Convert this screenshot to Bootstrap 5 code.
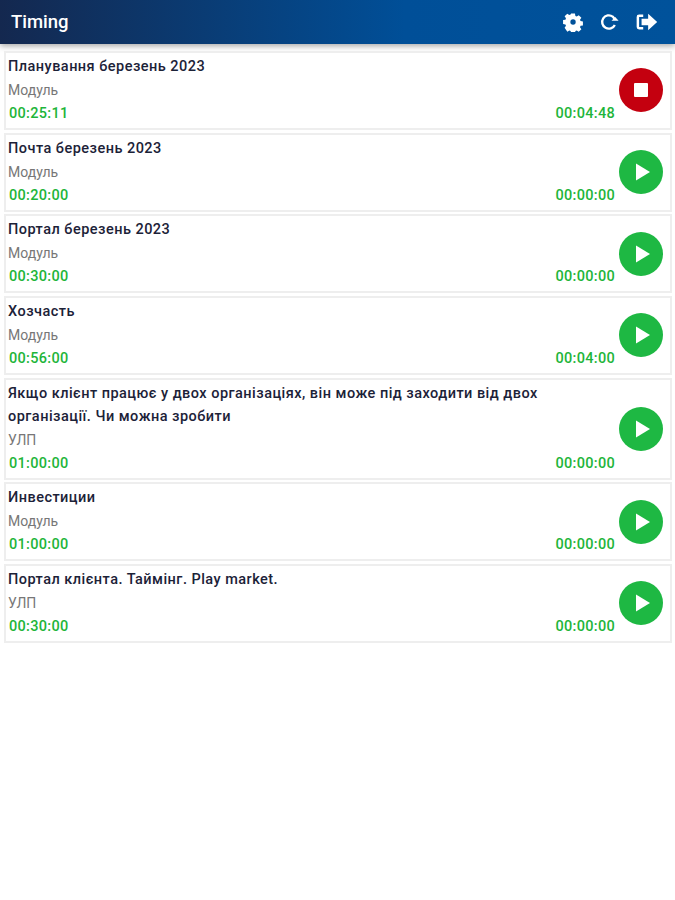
<!DOCTYPE html>
<html lang="en">
<head>
    <meta charset="UTF-8">
    <meta name="viewport" content="width=device-width, initial-scale=1.0">
    <title>Timing</title>
    <link href="https://cdn.jsdelivr.net/npm/bootstrap@5.3.0/dist/css/bootstrap.min.css" rel="stylesheet">
    <style>
        body { font-family: Roboto, "Liberation Sans", sans-serif; background: #fff; }
        .app-bar { height: 44px; padding: 0 17px 0 11px; background: linear-gradient(90deg, #14284f 0%, #004f98 60%, #00529b 100%); box-shadow: 0 2px 6px rgba(0,0,0,.35); }
        .app-title { color: #fff; font-size: 18.5px; font-weight: 500; padding-top: 2px; }
        .task-list { padding: 7px 3px 0 4px; gap: 2.7px; }
        .task-item { border: 2px solid #eee; padding: 2px 7px 3px 2px; min-height: 79px; }
        .task-name { color: #1c2238; font-size: 14.5px; font-weight: 500; line-height: 23px; letter-spacing: .47px; }
        .task-kind { color: #777; font-size: 14px; line-height: 24px; }
        .task-time { color: #1eb53a; font-size: 14.5px; font-weight: 500; line-height: 23px; letter-spacing: .3px; padding-left: 1px; }
        .round-btn { width: 44px; height: 44px; border: 0; padding: 0; border-radius: 50%; flex: none; margin-top: .5px; }
        .round-stop { background: #c4000f; }
        .round-play { background: #1eb843; }
    </style>
</head>
<body>

    <!-- Top bar -->
    <header class="app-bar d-flex align-items-center justify-content-between">
        <span class="app-title">Timing</span>
        <div class="d-flex align-items-center gap-3">
            <svg width="20" height="20" viewBox="0 0 24 24" fill="#fff"><path fill-rule="evenodd" d="M9.5 1h5l.6 3.1 1.7.7 2.6-1.8 3.5 3.5-1.8 2.6.7 1.7 3.1.6v5l-3.1.6-.7 1.7 1.8 2.6-3.5 3.5-2.6-1.8-1.7.7-.6 3.1h-5l-.6-3.1-1.7-.7-2.6 1.8L1 19.4l1.8-2.6-.7-1.7L-1 14.5v-5l3.1-.6.7-1.7L1 4.6 4.5 1.1l2.6 1.8 1.7-.7zM12 8.5a3.5 3.5 0 1 0 0 7 3.5 3.5 0 0 0 0-7z" transform="translate(1 1) scale(.92)"/></svg>
            <svg width="20" height="20" viewBox="0 0 24 24" fill="none" stroke="#fff" stroke-width="2.8"><path d="M19 15.5A8 8 0 1 1 16.5 5.5L18.5 8"/><path d="M15 10.5h8.5l-4-4.5z" fill="#fff" stroke="none"/></svg>
            <svg width="23" height="20" viewBox="0 0 28 24" fill="#fff"><path d="M10 3H5a3 3 0 0 0-3 3v12a3 3 0 0 0 3 3h5v-3H5V6h5z"/><path d="M16 2l11 10-11 10v-6H8V8h8z"/></svg>
        </div>
    </header>

    <!-- Task list -->
    <main id="tasks" class="task-list d-flex flex-column"></main>

    <script src="https://cdn.jsdelivr.net/npm/bootstrap@5.3.0/dist/js/bootstrap.bundle.min.js"></script>
    <script>
        const tasks = [
            { name: 'Планування березень 2023', kind: 'Модуль', plan: '00:25:11', spent: '00:04:48', running: true },
            { name: 'Почта березень 2023', kind: 'Модуль', plan: '00:20:00', spent: '00:00:00' },
            { name: 'Портал березень 2023', kind: 'Модуль', plan: '00:30:00', spent: '00:00:00' },
            { name: 'Хозчасть', kind: 'Модуль', plan: '00:56:00', spent: '00:04:00' },
            { name: 'Якщо клієнт працює у двох організаціях, він може під заходити від двох організації. Чи можна зробити', kind: 'УЛП', plan: '01:00:00', spent: '00:00:00' },
            { name: 'Инвестиции', kind: 'Модуль', plan: '01:00:00', spent: '00:00:00' },
            { name: 'Портал клієнта. Таймінг. Play market.', kind: 'УЛП', plan: '00:30:00', spent: '00:00:00' }
        ];
        const stopIcon = '<svg width="16" height="16" viewBox="0 0 16 16" fill="#fff"><rect x="1" y="1" width="14" height="14" rx="1"/></svg>';
        const playIcon = '<svg width="20" height="22" viewBox="0 0 20 22" fill="#fff"><path d="M5 2.5l14 8.5-14 8.5z"/></svg>';

        document.getElementById('tasks').innerHTML = tasks.map(t => `
            <div class="task-item d-flex align-items-center">
                <div class="flex-grow-1">
                    <div class="task-name">${t.name}</div>
                    <div class="task-kind">${t.kind}</div>
                    <div class="task-time d-flex justify-content-between"><span>${t.plan}</span><span>${t.spent}</span></div>
                </div>
                <button class="round-btn ${t.running ? 'round-stop' : 'round-play'} d-flex align-items-center justify-content-center ms-1">${t.running ? stopIcon : playIcon}</button>
            </div>`).join('');
    </script>
</body>
</html>
